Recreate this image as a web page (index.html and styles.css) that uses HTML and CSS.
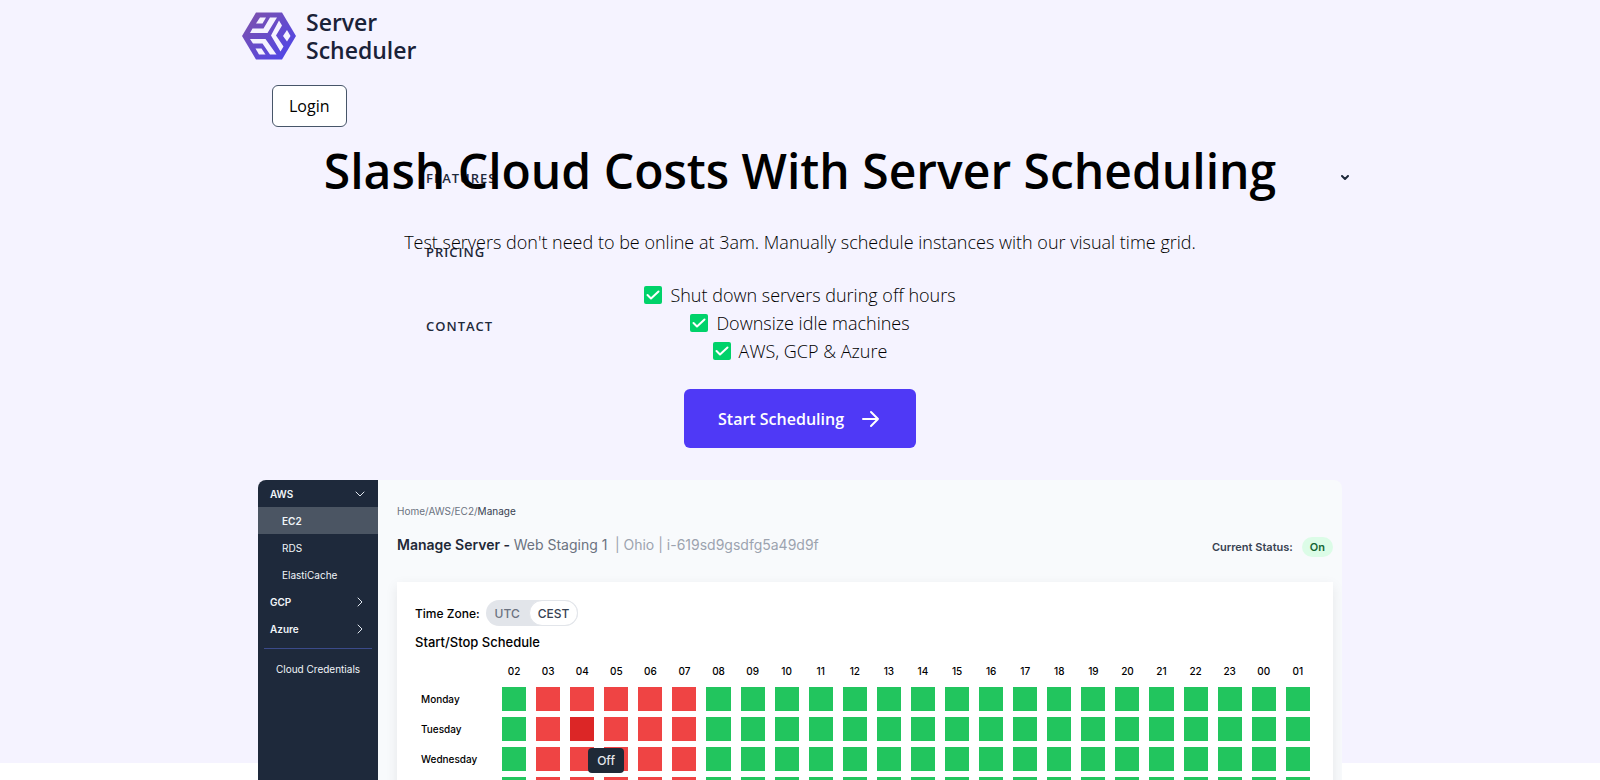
FILE: index.html
```html
<!DOCTYPE html>
<html lang="en">
<head>
    <meta charset="UTF-8">
    <meta name="viewport" content="width=device-width, initial-scale=1.0">
    <title>Server Scheduler</title>
    <link rel="stylesheet" href="styles.css">
</head>
<body>
    <div class="hero">
        <header class="header">
            <a class="logo" href="#">
                <svg class="logo-icon" viewBox="0 0 54 48" aria-hidden="true">
                    <defs>
                        <linearGradient id="logo-fill" x1="0" y1="0" x2="1" y2="1">
                            <stop offset="0" stop-color="#8152a8"/>
                            <stop offset="1" stop-color="#4a45ee"/>
                        </linearGradient>
                    </defs>
                    <path d="M14 .5H40L54 24L40 47.500H14L0 24Z" fill="url(#logo-fill)"/>
                    <g fill="#f5f3ff">
                        <path d="M18 5.500H24L20.500 11.500H14Z"/>
                        <path d="M28 5.500H35L25.500 21H8L10.500 16.500H21.500Z"/>
                        <path d="M37 8.500L40 13.500L34 23.500L41.500 34.500L38.500 39.500L29 23.500Z"/>
                        <path d="M45 18L48.500 24L45 29.500L41 24Z"/>
                        <path d="M8 27H23.500L34.500 42.500H28L20.500 31.500H11Z"/>
                        <path d="M13.500 36.500H19.500L23.500 42.500H17Z"/>
                    </g>
                </svg>
                <span class="logo-text">Server<br>Scheduler</span>
            </a>
            <button class="login" type="button">Login</button>
            <nav class="nav">
                <a class="nav-link" href="#">Features
                    <svg class="caret" viewBox="0 0 8 6" aria-hidden="true"><path d="M1 1L4 4L7 1"/></svg>
                </a>
                <a class="nav-link" href="#">Pricing</a>
                <a class="nav-link" href="#">Contact</a>
            </nav>
        </header>

        <main class="intro">
            <h1 class="title">Slash Cloud Costs With Server Scheduling</h1>
            <p class="lead">Test servers don't need to be online at 3am. Manually schedule instances with our visual time grid.</p>
            <ul class="benefits">
                <li><svg class="check" viewBox="0 0 18 18" aria-hidden="true"><rect width="18" height="18" rx="2"/><path d="M3.500 9L7 12.500L14.500 5.500"/></svg>Shut down servers during off hours</li>
                <li><svg class="check" viewBox="0 0 18 18" aria-hidden="true"><rect width="18" height="18" rx="2"/><path d="M3.500 9L7 12.500L14.500 5.500"/></svg>Downsize idle machines</li>
                <li><svg class="check" viewBox="0 0 18 18" aria-hidden="true"><rect width="18" height="18" rx="2"/><path d="M3.500 9L7 12.500L14.500 5.500"/></svg>AWS, GCP &amp; Azure</li>
            </ul>
            <button class="start" type="button">Start Scheduling
                <svg class="arrow" viewBox="0 0 18 18" aria-hidden="true"><path d="M1 9H16M9 2L16 9L9 16"/></svg>
            </button>
        </main>
    </div>

    <div class="preview">
        <section class="dashboard">
            <aside class="sidebar">
                <a class="side-link group" href="#">AWS <svg class="chevron" viewBox="0 0 10 10" aria-hidden="true"><path d="M1 3L5 7L9 3"/></svg></a>
                <a class="side-link sub active" href="#">EC2</a>
                <a class="side-link sub" href="#">RDS</a>
                <a class="side-link sub" href="#">ElastiCache</a>
                <a class="side-link group" href="#">GCP <svg class="chevron" viewBox="0 0 10 10" aria-hidden="true"><path d="M3 1L7 5L3 9"/></svg></a>
                <a class="side-link group" href="#">Azure <svg class="chevron" viewBox="0 0 10 10" aria-hidden="true"><path d="M3 1L7 5L3 9"/></svg></a>
                <hr class="side-line">
                <a class="side-link credentials" href="#">Cloud Credentials</a>
            </aside>
            <div class="content">
                <div class="breadcrumb">Home/AWS/EC2/<span>Manage</span></div>
                <div class="server-row">
                    <h2 class="server">Manage Server - <span class="server-name">Web Staging 1</span> <span class="server-id">| Ohio | i-619sd9gsdfg5a49d9f</span></h2>
                    <div class="status">Current Status: <span class="badge">On</span></div>
                </div>
                <div class="card">
                    <div class="zone">Time Zone:
                        <div class="toggle">
                            <button type="button">UTC</button>
                            <button class="selected" type="button">CEST</button>
                        </div>
                    </div>
                    <h3 class="schedule-title">Start/Stop Schedule</h3>
                    <table class="schedule" id="schedule"></table>
                </div>
            </div>
        </section>
    </div>

    <script src="script.js"></script>
</body>
</html>
```

FILE: styles.css
```css
* {
    box-sizing: border-box;
}

body {
    margin: 0;
    background-color: #fff;
    color: #000;
    font-family: "Open Sans", "Noto Sans", sans-serif;
}

a {
    color: inherit;
    text-decoration: none;
}

button {
    font-family: inherit;
    cursor: pointer;
}

svg {
    fill: none;
    stroke-linecap: round;
    stroke-linejoin: round;
}

/* Header */
.hero {
    background-color: #f5f3ff;
}

.header {
    position: relative;
    max-width: 1116px;
    margin: 0 auto;
}

.logo {
    display: flex;
    align-items: center;
    gap: 10px;
    width: max-content;
    padding-top: 8px;
}

.logo-icon {
    width: 54px;
    height: 48px;
}

.logo-text {
    color: #1a2238;
    font-size: 23px;
    font-weight: 600;
    line-height: 28px;
}

.login {
    display: block;
    height: 42px;
    margin: 21px 30px 0;
    padding: 0 16px;
    border: 1px solid #475569;
    border-radius: 6px;
    background-color: #fff;
    color: #000;
    font-size: 16px;
    font-weight: 500;
}

/* The menu opens over the intro */
.nav {
    position: absolute;
    top: 141px;
    left: 184px;
    right: 0;
}

.nav-link {
    display: flex;
    justify-content: space-between;
    align-items: center;
    height: 74px;
    padding-right: 9px;
    color: #1e293b;
    font-size: 13px;
    font-weight: 600;
    letter-spacing: 1px;
    text-transform: uppercase;
}

.caret {
    width: 8px;
    height: 6px;
    stroke: #1e293b;
    stroke-width: 2;
}

/* Intro */
.intro {
    position: relative;
    display: flex;
    flex-direction: column;
    align-items: center;
    padding: 12px 24px 32px;
    text-align: center;
    pointer-events: none;
}

.title {
    margin: 0;
    font-size: 48px;
    font-weight: 600;
    line-height: 64px;
}

.lead {
    margin: 25px 0 0;
    font-size: 18px;
    font-weight: 300;
    line-height: 28px;
}

.benefits {
    margin: 25px 0 0;
    padding: 0;
    list-style: none;
    font-size: 18px;
    font-weight: 300;
    line-height: 28px;
}

.benefits li {
    display: flex;
    justify-content: center;
    align-items: center;
    gap: 8px;
}

.check {
    width: 18px;
    height: 18px;
    stroke: #fff;
    stroke-width: 2;
}

.check rect {
    fill: #00d26a;
    stroke: none;
}

.start {
    display: flex;
    align-items: center;
    gap: 18px;
    height: 59px;
    margin-top: 24px;
    padding: 0 36px 0 34px;
    border: none;
    border-radius: 6px;
    background-color: #4f39f6;
    color: #fff;
    font-size: 16px;
    font-weight: 600;
    pointer-events: auto;
}

.start:hover {
    background-color: #4330d8;
}

.arrow {
    width: 18px;
    height: 18px;
    stroke: #fff;
    stroke-width: 2;
}

/* Dashboard, hangs out of the coloured area at the bottom */
.preview {
    background: linear-gradient(#f5f3ff calc(100% - 56px), #fff 0);
}

.dashboard {
    display: flex;
    max-width: 1084px;
    margin: 0 auto;
    border-radius: 8px;
    background-color: #f8fafc;
    overflow: hidden;
    font-family: Inter, "Noto Sans", sans-serif;
}

.sidebar {
    flex: 0 0 120px;
    background-color: #1e293b;
    color: #f1f5f9;
    font-size: 10px;
}

.side-link {
    display: flex;
    justify-content: space-between;
    align-items: center;
    height: 27px;
    padding: 0 13px 0 12px;
}

.group {
    font-weight: 600;
}

.sub {
    padding-left: 24px;
}

.active {
    background-color: #4b5563;
    font-weight: 600;
}

.chevron {
    width: 10px;
    height: 10px;
    stroke: #e2e8f0;
}

.side-line {
    margin: 6px;
    border: none;
    border-top: 1px solid #3b4a8a;
}

.credentials {
    padding: 0;
    justify-content: center;
}

.content {
    flex: 1;
    min-width: 0;
    padding: 22px 9px 0 19px;
}

.breadcrumb {
    color: #6b7280;
    font-size: 10px;
    line-height: 18px;
}

.breadcrumb span {
    color: #374151;
}

.server-row {
    display: flex;
    justify-content: space-between;
    align-items: flex-end;
    margin-top: 13px;
}

.server {
    margin: 0;
    color: #1f2937;
    font-size: 14px;
    font-weight: 600;
    line-height: 24px;
}

.server span {
    font-weight: 400;
}

.server .server-name {
    margin-right: 4px;
    color: #6b7280;
}

.server .server-id {
    color: #9ca3af;
}

.status {
    display: flex;
    align-items: center;
    gap: 9px;
    color: #374151;
    font-size: 11px;
    font-weight: 600;
}

.badge {
    padding: 0 8px;
    border-radius: 10px;
    background-color: #dcfce7;
    color: #166534;
    line-height: 20px;
}

.card {
    margin-top: 25px;
    padding: 18px 18px 15px;
    background-color: #fff;
    box-shadow: 0 4px 12px rgba(0, 0, 0, 0.08);
}

.zone {
    display: flex;
    align-items: center;
    gap: 6px;
    font-size: 12px;
    font-weight: 500;
}

.toggle {
    display: flex;
    border-radius: 13px;
    background-color: #e2e5ea;
}

.toggle button {
    height: 26px;
    padding: 0 8px;
    border: 1px solid transparent;
    border-radius: 13px;
    background-color: transparent;
    color: #6b7280;
    font-size: 12px;
    font-weight: 500;
}

.toggle .selected {
    border-color: #e2e5ea;
    background-color: #fff;
    color: #374151;
}

.schedule-title {
    margin: 6px 0 0;
    font-size: 13px;
    font-weight: 500;
    line-height: 20px;
}

.schedule {
    width: 100%;
    margin-top: 6px;
    border-collapse: collapse;
    table-layout: fixed;
}

.schedule th,
.schedule td {
    padding: 3px 5px;
    font-size: 10px;
    font-weight: 500;
    line-height: 20px;
}

.schedule thead th {
    padding: 3px 0;
}

.schedule .day {
    width: 82px;
    padding: 0 6px;
    text-align: left;
}

.slot {
    position: relative;
    height: 24px;
    background-color: #22c55e;
}

.slot.off {
    background-color: #ef4444;
}

.slot.hovered {
    background-color: #dc2626;
}

.tooltip {
    position: absolute;
    top: 31px;
    left: 18px;
    z-index: 1;
    padding: 0 9px;
    border-radius: 4px;
    background-color: #1f2937;
    color: #e5e7eb;
    font-size: 12px;
    line-height: 25px;
}
```

FILE: script.js
```js
const days = ['Monday', 'Tuesday', 'Wednesday', 'Thursday'];
const schedule = document.getElementById('schedule');

function hourLabel(i) {
    return String((i + 2) % 24).padStart(2, '0');
}

let head = '<th class="day"></th>';
for (let i = 0; i < 24; i++) {
    head += `<th scope="col">${hourLabel(i)}</th>`;
}

let rows = '';
days.forEach((day, d) => {
    rows += `<tr><th class="day" scope="row">${day}</th>`;
    for (let i = 0; i < 24; i++) {
        // servers are off from 03 to 07
        const off = i > 0 && i < 6;
        const hovered = d === 1 && i === 2;
        rows += `<td><div class="slot${off ? ' off' : ''}${hovered ? ' hovered' : ''}">`;
        rows += hovered ? '<span class="tooltip">Off</span>' : '';
        rows += '</div></td>';
    }
    rows += '</tr>';
});

schedule.innerHTML = `<thead><tr>${head}</tr></thead><tbody>${rows}</tbody>`;
```
